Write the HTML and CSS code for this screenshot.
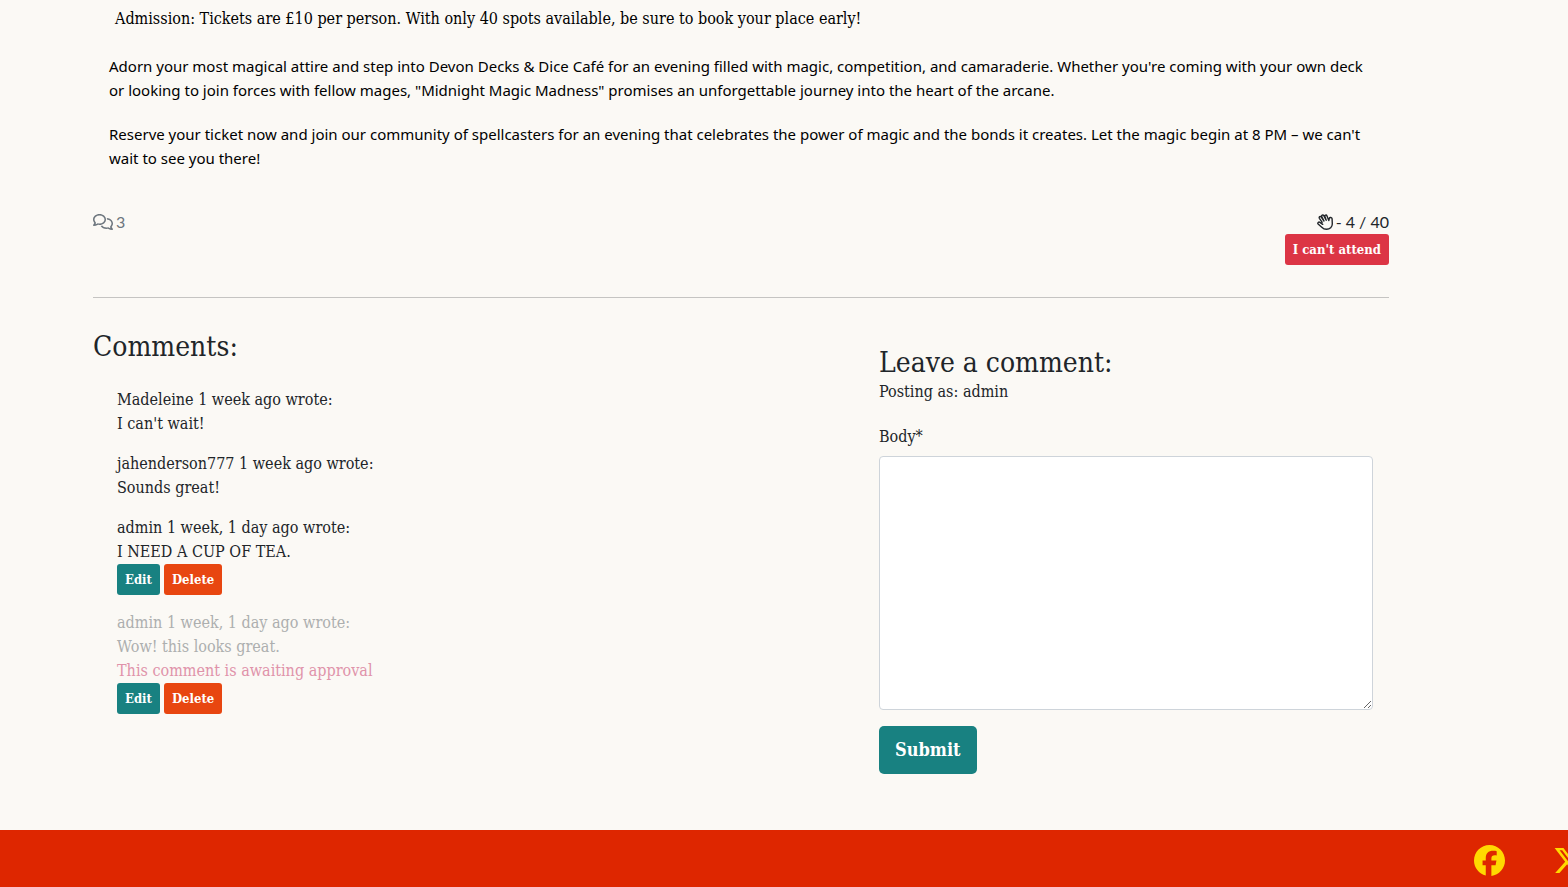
FILE: index.html
```html
<!DOCTYPE html>
<html lang="en">
<head>
<meta charset="utf-8">
<meta name="viewport" content="width=device-width, initial-scale=1">
<title>Midnight Magic Madness</title>
<link rel="stylesheet" href="styles.css">
</head>
<body>
<main class="page">
  <article class="event">
    <p class="admission">Admission: Tickets are £10 per person. With only 40 spots available, be sure to book your place early!</p>
    <p class="event-text">Adorn your most magical attire and step into Devon Decks &amp; Dice Café for an evening filled with magic, competition, and camaraderie. Whether you're coming with your own deck or looking to join forces with fellow mages, "Midnight Magic Madness" promises an unforgettable journey into the heart of the arcane.</p>
    <p class="event-text">Reserve your ticket now and join our community of spellcasters for an evening that celebrates the power of magic and the bonds it creates. Let the magic begin at 8 PM – we can't wait to see you there!</p>
  </article>

  <section class="stats">
    <div class="count muted">
      <svg class="icon-comments" viewBox="0 0 640 512" aria-hidden="true"><path fill="currentColor" d="M88.2 309.1c9.8-18.3 6.8-40.8-7.5-55.8C59.4 230.9 48 204 48 176c0-63.5 63.8-128 160-128s160 64.5 160 128s-63.8 128-160 128c-13.1 0-25.8-1.3-37.8-3.6c-10.4-2-21.2-.6-30.7 4.2c-4.1 2.1-8.3 4.1-12.6 6c-16 7.2-32.9 13.5-49.9 18c2.8-4.6 5.4-9.1 7.9-13.6c1.1-1.9 2.2-3.9 3.2-5.9zM208 352c114.9 0 208-78.8 208-176S322.9 0 208 0S0 78.8 0 176c0 41.8 17.2 80.1 45.9 110.3c-.9 1.7-1.9 3.5-2.8 5.1c-10.3 18.4-22.3 36.5-36.6 52.1c-6.6 7-8.3 17.2-4.6 25.9C5.8 378.3 14.4 384 24 384c43 0 86.5-13.3 122.7-29.7c4.8-2.2 9.6-4.5 14.2-6.8c15.1 3 30.9 4.5 47.1 4.5zM432 480c16.2 0 31.9-1.6 47.1-4.5c4.6 2.3 9.4 4.6 14.2 6.8C529.5 498.7 573 512 616 512c9.6 0 18.2-5.7 22-14.5c3.8-8.8 2-19-4.6-25.9c-14.2-15.6-26.2-33.7-36.6-52.1c-.9-1.7-1.9-3.4-2.8-5.1C622.8 384.1 640 345.8 640 304c0-94.4-87.9-171.5-198.2-175.8c4.1 15.2 6.2 31.2 6.2 47.8l0 .6c87.2 6.7 144 67.5 144 127.4c0 28-11.4 54.9-32.7 77.2c-14.3 15-17.3 37.6-7.5 55.8c1.1 2 2.2 4 3.2 5.9c2.5 4.5 5.2 9 7.9 13.6c-17-4.5-33.9-10.7-49.9-18c-4.3-1.9-8.5-3.9-12.6-6c-9.5-4.8-20.3-6.2-30.7-4.2c-12.1 2.4-24.8 3.6-37.8 3.6c-61.7 0-110-26.5-136.8-62.3c-16 5.4-32.8 9.4-50 11.8C279 439.8 350 480 432 480z"/></svg>
      <span>3</span>
    </div>
    <div class="attendance">
      <div class="count">
        <svg class="icon-hand" viewBox="0 0 16 16" aria-hidden="true"><path fill="none" stroke="currentColor" stroke-width="1.4" stroke-linecap="round" stroke-linejoin="round" d="M5.200 8.300 2.400 4.300c-.9-1.400 1-2.500 1.900-1.300L7 7 4.700 2.700c-.7-1.500 1.300-2.400 2.100-1L9.200 6.300 7.900 2.600c-.5-1.500 1.500-2.200 2.100-.7l1.800 4.700.5-2.200c.4-1.500 2.700-1.100 2.800.4l.2 4.900c.1 3.300-2.400 5.600-5.800 5.600-2 0-3.500-.8-4.700-2.100L1.100 10c-.9-1.200.6-2.500 1.800-1.600l2.800 1.900"/></svg>
        <span>- 4 / 40</span>
      </div>
      <button class="btn btn-danger" type="button">I can't attend</button>
    </div>
  </section>

  <hr class="rule">

  <div class="columns">
    <section class="comments">
      <h2 class="heading">Comments:</h2>
      <div class="comment-list">
        <article class="comment">
          <p>Madeleine 1 week ago wrote:</p>
          <p>I can't wait!</p>
        </article>
        <article class="comment">
          <p>jahenderson777 1 week ago wrote:</p>
          <p>Sounds great!</p>
        </article>
        <article class="comment">
          <p>admin 1 week, 1 day ago wrote:</p>
          <p>I NEED A CUP OF TEA.</p>
          <div class="actions">
            <button class="btn btn-edit" type="button">Edit</button>
            <button class="btn btn-delete" type="button">Delete</button>
          </div>
        </article>
        <article class="comment">
          <div class="pending">
            <p>admin 1 week, 1 day ago wrote:</p>
            <p>Wow! this looks great.</p>
            <p class="approval">This comment is awaiting approval</p>
          </div>
          <div class="actions">
            <button class="btn btn-edit" type="button">Edit</button>
            <button class="btn btn-delete" type="button">Delete</button>
          </div>
        </article>
      </div>
    </section>

    <section class="leave">
      <h2 class="heading">Leave a comment:</h2>
      <p>Posting as: admin</p>
      <form class="form">
        <label for="body">Body*</label>
        <textarea class="body-field" id="body" name="body" required></textarea>
        <button class="btn-submit" type="submit">Submit</button>
      </form>
    </section>
  </div>
</main>

<footer class="footer">
  <nav class="social">
    <a href="#" aria-label="Facebook"><svg viewBox="0 0 512 512"><path fill="currentColor" d="M512 256C512 114.600 397.400 0 256 0S0 114.600 0 256C0 376 82.700 476.800 194.200 504.500V334.200H141.400V256h52.800V222.300c0-87.100 39.400-127.500 125-127.500c16.200 0 44.200 3.200 55.700 6.400V172c-6-.6-16.500-1-29.600-1c-42 0-58.200 15.900-58.200 57.200V256h83.600l-14.400 78.200H287V510.100C413.800 494.800 512 386.900 512 256z"/></svg></a>
    <a href="#" aria-label="X"><svg viewBox="0 0 512 512"><path fill="currentColor" d="M389.200 48h70.600L305.600 224.200 487 464H345L233.700 318.600 106.500 464H35.800L200.700 275.500 26.800 48H172.400L272.900 180.900 389.200 48zM364.400 421.800h39.100L151.100 88h-42L364.400 421.800z"/></svg></a>
  </nav>
</footer>
</body>
</html>
```
FILE: styles.css
```css
* { box-sizing: border-box; }

body {
  display: flex;
  flex-direction: column;
  min-height: 100vh;
  margin: 0;
  background: #fbf9f5;
  color: #212529;
  font-family: "DejaVu Serif Condensed", "DejaVu Serif", serif;
  font-size: 16px;
  line-height: 24px;
}

p, h2 { margin: 0; }

.page {
  flex: 1;
  padding: 7px 179px 40px 93px;
}

.event {
  padding: 0 16px;
  color: #000;
}

.admission {
  margin-bottom: 23px;
  padding-left: 6px;
}

.event-text {
  margin-bottom: 20px;
  font-family: "Noto Sans", "Open Sans", sans-serif;
  font-size: 15px;
}

.stats {
  display: flex;
  justify-content: space-between;
  align-items: flex-start;
  margin-top: 40px;
}

.count {
  display: flex;
  align-items: center;
  gap: 3px;
  font-family: Lato, sans-serif;
}

.muted { color: #6c757d; }

.icon-comments { width: 20px; height: 16px; }
.icon-hand { width: 16px; height: 16px; }

.attendance {
  display: flex;
  flex-direction: column;
  align-items: flex-end;
}

.btn {
  height: 31px;
  padding: 0 8px;
  border: 0;
  border-radius: 3px;
  color: #fff;
  font: inherit;
  font-size: 13px;
  font-weight: 700;
}

.btn-danger { background: #dc3545; }
.btn-edit { background: #188181; }
.btn-delete { background: #e84610; }

.rule {
  margin: 32px 0;
  border: 0;
  border-top: 1px solid #c5c4c2;
}

.columns {
  display: grid;
  grid-template-columns: 770px 1fr;
}

.heading {
  font-size: 28px;
  font-weight: 400;
  line-height: 34px;
}

.comment-list {
  display: flex;
  flex-direction: column;
  gap: 16px;
  padding: 24px;
}

.actions {
  display: flex;
  gap: 4px;
}

.pending { color: #adafaf; }
.approval { color: #e093aa; }

.leave { padding: 16px 16px 15px; }

.form {
  display: flex;
  flex-direction: column;
  align-items: flex-start;
  margin-top: 21px;
}

.body-field {
  width: 100%;
  height: 254px;
  margin: 7px 0 16px;
  padding: 6px 12px;
  border: 1px solid #ced4da;
  border-radius: 4px;
  background: #fff;
  font: inherit;
  resize: vertical;
}

.btn-submit {
  height: 48px;
  padding: 0 16px;
  border: 0;
  border-radius: 5px;
  background: #188181;
  color: #fff;
  font: inherit;
  font-size: 18px;
  font-weight: 700;
}

.footer {
  overflow: hidden;
  background: #de2600;
}

.social {
  display: flex;
  justify-content: flex-end;
  gap: 48px;
  margin-right: -16px;
  padding: 15px 0 11px;
}

.social a {
  display: block;
  height: 31px;
  color: #ffd900;
}

.social svg {
  display: block;
  width: 31px;
  height: 31px;
}
```
